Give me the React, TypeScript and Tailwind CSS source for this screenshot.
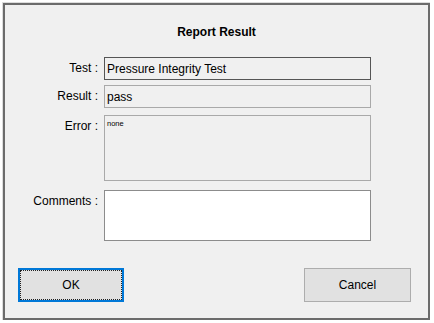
export default function App() {
  return (
    <div className="w-[434px] h-[323px] bg-white pl-[2px] pt-[2px] overflow-hidden font-['Liberation_Sans',Arial,sans-serif] text-black">
      <div className="w-[428px] h-[318px] border-l border-t border-[#dcdcdc]">
        <div className="h-full border-2 border-[#6b6b6b] bg-[#f0f0f0] flex flex-col pt-[20px]">
          <div className="h-[14px] text-[12px] leading-[14px] font-bold text-center">Report Result</div>

          {/* fields */}
          <div className="mt-[18px] flex flex-col">
            <div className="flex">
              <span className="w-[93px] pt-[4px] text-right text-[12px] leading-[14px]">Test :</span>
              <div className="ml-[6px] w-[267px] h-[23px] border border-[#555] flex items-center pl-[2px] text-[12px]">
                Pressure Integrity Test
              </div>
            </div>
            <div className="flex mt-[5px]">
              <span className="w-[93px] pt-[4px] text-right text-[12px] leading-[14px]">Result :</span>
              <div className="ml-[6px] w-[267px] h-[23px] border border-[#a9a9a9] flex items-center pl-[2px] text-[12px]">
                pass
              </div>
            </div>
            <div className="flex mt-[7px]">
              <span className="w-[93px] pt-[4px] text-right text-[12px] leading-[14px]">Error :</span>
              <div className="ml-[6px] w-[267px] h-[66px] border border-[#a9a9a9] pl-[2px] pt-[3px] text-[7.5px] leading-[9px]">
                none
              </div>
            </div>
            <div className="flex mt-[9px]">
              <span className="w-[93px] pt-[4px] text-right text-[12px] leading-[14px]">Comments :</span>
              <div className="ml-[6px] w-[267px] h-[51px] border border-[#8c8c8c] bg-white" />
            </div>
          </div>

          {/* buttons */}
          <div className="mt-[27px] flex justify-between pl-[13px] pr-[17px]">
            <button className="w-[106px] h-[34px] bg-[#e1e1e1] border-2 border-[#0078d7] outline-1 outline-dotted outline-[#222] outline-offset-[-3px] text-[12px]">
              OK
            </button>
            <button className="w-[107px] h-[34px] bg-[#e1e1e1] border border-[#adadad] text-[12px]">
              Cancel
            </button>
          </div>
        </div>
      </div>
    </div>
  );
}
